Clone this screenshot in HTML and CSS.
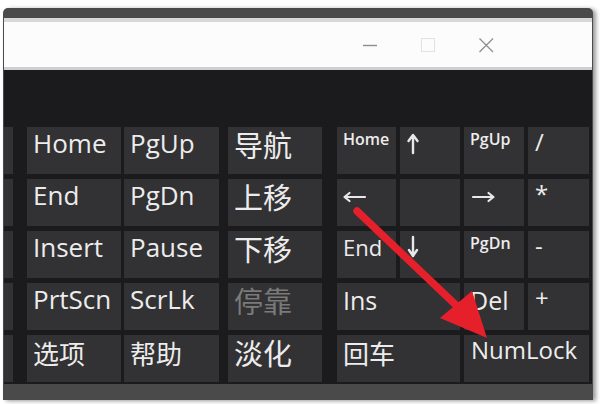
FILE: index.html
```html
<!DOCTYPE html>
<html lang="zh-CN">
<head>
<meta charset="utf-8">
<title>屏幕键盘</title>
<link rel="stylesheet" href="styles.css">
</head>
<body>
<div class="window">
  <div class="frame-top"></div>
  <div class="titlebar">
    <svg class="ctl" width="15" height="15" viewBox="0 0 15 15"><line x1="0" y1="7.5" x2="14" y2="7.5" stroke="#8e8e8e" stroke-width="1.4"/></svg>
    <svg class="ctl" width="15" height="15" viewBox="0 0 15 15"><rect x="0.5" y="0.5" width="13" height="13" fill="none" stroke="#e2e2e2" stroke-width="1"/></svg>
    <svg class="ctl" width="15" height="15" viewBox="0 0 15 15"><path d="M0.5 0.5 L14 14 M14 0.5 L0.5 14" stroke="#8e8e8e" stroke-width="1.3" fill="none"/></svg>
  </div>
  <div class="keyboard">
    <div class="col-partial">
      <div class="key"></div><div class="key"></div><div class="key"></div><div class="key"></div><div class="key"></div>
    </div>
    <div class="group-nav">
      <div class="key">Home</div><div class="key">PgUp</div>
      <div class="key">End</div><div class="key">PgDn</div>
      <div class="key">Insert</div><div class="key">Pause</div>
      <div class="key">PrtScn</div><div class="key">ScrLk</div>
      <div class="key zh-sm">选项</div><div class="key zh-sm">帮助</div>
    </div>
    <div class="group-cmd">
      <div class="key zh">导航</div>
      <div class="key zh">上移</div>
      <div class="key zh">下移</div>
      <div class="key zh disabled">停靠</div>
      <div class="key zh">淡化</div>
    </div>
    <div class="numpad">
      <div class="key np-sm">Home</div>
      <div class="key np-icon"><svg width="26" height="30" viewBox="0 0 26 30"><path d="M13 26 V9 M8.5 14 L13 8 L17.5 14" stroke="#e8e8e8" stroke-width="2.4" fill="none" stroke-linecap="round" stroke-linejoin="round"/></svg></div>
      <div class="key np-sm">PgUp</div>
      <div class="key np-md">/</div>

      <div class="key np-icon"><svg width="34" height="30" viewBox="0 0 34 30"><path d="M8 18 H28 M12.5 14 L7.5 18 L12.5 22" stroke="#e8e8e8" stroke-width="2.2" fill="none" stroke-linecap="round" stroke-linejoin="round"/></svg></div>
      <div class="key"></div>
      <div class="key np-icon"><svg width="34" height="30" viewBox="0 0 34 30"><path d="M9 18 H29 M24.5 14 L29.5 18 L24.5 22" stroke="#e8e8e8" stroke-width="2.2" fill="none" stroke-linecap="round" stroke-linejoin="round"/></svg></div>
      <div class="key np-md">*</div>

      <div class="key np-end">End</div>
      <div class="key np-icon"><svg width="26" height="30" viewBox="0 0 26 30"><path d="M13 6 V24 M9 19 L13 25 L17 19" stroke="#e8e8e8" stroke-width="2.4" fill="none" stroke-linecap="round" stroke-linejoin="round"/></svg></div>
      <div class="key np-sm">PgDn</div>
      <div class="key np-md">-</div>

      <div class="key np-lg wide">Ins</div>
      <div class="key np-lg">Del</div>
      <div class="key np-md">+</div>

      <div class="key zh-sm wide">回车</div>
      <div class="key np-num wide">NumLock</div>
    </div>
  </div>
  <div class="frame-bottom"></div>
</div>
<svg class="annotation" width="603" height="404" viewBox="0 0 603 404">
  <line x1="357" y1="211" x2="458" y2="307" stroke="#e5202b" stroke-width="7.5" stroke-linecap="round"/>
  <polygon points="440,318 472,291 487,338" fill="#e5202b"/>
</svg>
</body>
</html>
```

FILE: styles.css
```css
html, body {
  margin: 0;
  padding: 0;
  background: #ffffff;
}

body {
  position: relative;
  width: 603px;
  height: 404px;
  overflow: hidden;
}

.window {
  margin: 8px 0 0 3px;
  width: 590px;
  height: 392px;
  background: #4a4a4a;
  border-radius: 5px 5px 0 0;
  box-shadow: 3px 1px 4px rgba(0, 0, 0, 0.4);
  display: flex;
  flex-direction: column;
}

.frame-top {
  height: 10px;
  flex: none;
}

.titlebar {
  flex: none;
  height: 52px;
  margin: 0 1px;
  border-top: 4px solid #d8d8da;
  border-bottom: 3px solid #cfcfd1;
  background: #fcfcfc;
  display: flex;
  justify-content: flex-end;
  align-items: center;
  gap: 43px;
  padding: 2px 98px 0 0;
  box-sizing: border-box;
}

.ctl {
  display: block;
}

.keyboard {
  flex: none;
  height: 314px;
  margin: 0 1px;
  background: #1b1a1c;
  display: flex;
  box-sizing: border-box;
  padding: 57px 0 2px 0;
}

.col-partial {
  width: 9px;
  margin-right: 14px;
  display: grid;
  grid-template-rows: repeat(5, 47px);
  row-gap: 5px;
}

.group-nav {
  margin-right: 9px;
  display: grid;
  grid-template-columns: 94px 95px;
  grid-template-rows: repeat(5, 47px);
  gap: 5px 3px;
}

.group-cmd {
  margin-right: 15px;
  display: grid;
  grid-template-columns: 94px;
  grid-template-rows: repeat(5, 47px);
  row-gap: 5px;
}

.numpad {
  display: grid;
  grid-template-columns: 59px 60px 60px 61px;
  grid-template-rows: repeat(5, 47px);
  gap: 5px 4px;
}

.key {
  background: #323133;
  color: #ececec;
  font-family: "Open Sans", "Noto Sans", sans-serif;
  font-weight: 400;
  font-size: 26px;
  line-height: 26px;
  padding: 3px 0 0 6px;
  white-space: nowrap;
}

.key.wide {
  grid-column: span 2;
}

.key.zh {
  font-family: "Noto Sans CJK SC", "Open Sans", sans-serif;
  font-size: 29px;
  line-height: 29px;
  padding: 3px 0 0 6px;
}

.key.zh-sm {
  font-family: "Noto Sans CJK SC", "Open Sans", sans-serif;
  font-size: 26px;
  line-height: 26px;
  padding: 5px 0 0 6px;
}

.key.disabled {
  color: #7a7a7a;
}

.key.np-sm {
  font-size: 16px;
  line-height: 16px;
  font-weight: 600;
  padding: 4px 0 0 6px;
}

.key.np-md {
  font-size: 24px;
  line-height: 24px;
  padding: 3px 0 0 7px;
}

.key.np-end {
  font-size: 22px;
  line-height: 22px;
  padding: 5px 0 0 6px;
}

.key.np-lg {
  font-size: 25px;
  line-height: 25px;
  padding: 5px 0 0 6px;
}

.key.np-num {
  font-size: 24px;
  line-height: 24px;
  padding: 3px 0 0 7px;
}

.key.np-icon {
  padding: 0;
}

.key.np-icon svg {
  display: block;
}

.frame-bottom {
  flex: 1;
}

.annotation {
  position: absolute;
  left: 0;
  top: 0;
  pointer-events: none;
}
```
